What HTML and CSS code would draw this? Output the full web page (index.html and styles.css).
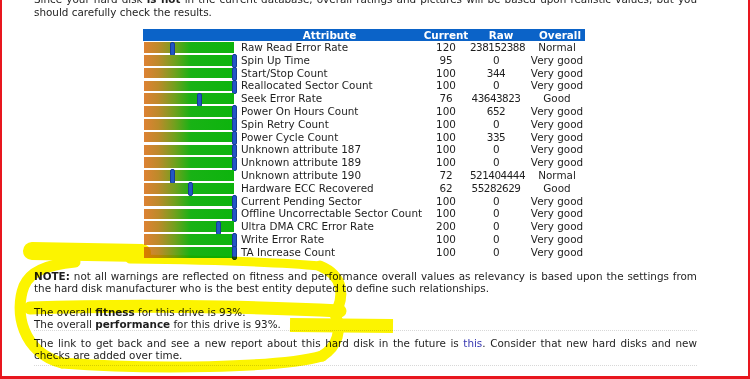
FILE: index.html
```html
<!DOCTYPE html>
<html>
<head>
<meta charset="utf-8">
<link rel="stylesheet" href="styles.css">
</head>
<body>
<div class="frame">
  <div class="content">
    <p class="intro">Since your hard disk <b>is not</b> in the current database, overall ratings and pictures will be based upon realistic values, but you should carefully check the results.</p>

    <div class="smart">
      <div class="hd"></div><div class="hd">Attribute</div><div class="hd">Current</div><div class="hd raw-h">Raw</div><div class="hd ov-h">Overall</div>

      <div class="barcell"><div class="bar"><span class="pin" style="left:25.5px"></span></div></div><div class="name">Raw Read Error Rate</div><div class="num">120</div><div class="num raw">238152388</div><div class="num ov">Normal</div>
      <div class="barcell"><div class="bar"><span class="pin" style="left:88px"></span></div></div><div class="name">Spin Up Time</div><div class="num">95</div><div class="num raw">0</div><div class="num ov">Very good</div>
      <div class="barcell"><div class="bar"><span class="pin" style="left:88px"></span></div></div><div class="name">Start/Stop Count</div><div class="num">100</div><div class="num raw">344</div><div class="num ov">Very good</div>
      <div class="barcell"><div class="bar"><span class="pin" style="left:88px"></span></div></div><div class="name">Reallocated Sector Count</div><div class="num">100</div><div class="num raw">0</div><div class="num ov">Very good</div>
      <div class="barcell"><div class="bar"><span class="pin" style="left:53px"></span></div></div><div class="name">Seek Error Rate</div><div class="num">76</div><div class="num raw">43643823</div><div class="num ov">Good</div>
      <div class="barcell"><div class="bar"><span class="pin" style="left:88px"></span></div></div><div class="name">Power On Hours Count</div><div class="num">100</div><div class="num raw">652</div><div class="num ov">Very good</div>
      <div class="barcell"><div class="bar"><span class="pin" style="left:88px"></span></div></div><div class="name">Spin Retry Count</div><div class="num">100</div><div class="num raw">0</div><div class="num ov">Very good</div>
      <div class="barcell"><div class="bar"><span class="pin" style="left:88px"></span></div></div><div class="name">Power Cycle Count</div><div class="num">100</div><div class="num raw">335</div><div class="num ov">Very good</div>
      <div class="barcell"><div class="bar"><span class="pin" style="left:88px"></span></div></div><div class="name">Unknown attribute 187</div><div class="num">100</div><div class="num raw">0</div><div class="num ov">Very good</div>
      <div class="barcell"><div class="bar"><span class="pin" style="left:88px"></span></div></div><div class="name">Unknown attribute 189</div><div class="num">100</div><div class="num raw">0</div><div class="num ov">Very good</div>
      <div class="barcell"><div class="bar"><span class="pin" style="left:25.5px"></span></div></div><div class="name">Unknown attribute 190</div><div class="num">72</div><div class="num raw">521404444</div><div class="num ov">Normal</div>
      <div class="barcell"><div class="bar"><span class="pin" style="left:44px"></span></div></div><div class="name">Hardware ECC Recovered</div><div class="num">62</div><div class="num raw">55282629</div><div class="num ov">Good</div>
      <div class="barcell"><div class="bar"><span class="pin" style="left:88px"></span></div></div><div class="name">Current Pending Sector</div><div class="num">100</div><div class="num raw">0</div><div class="num ov">Very good</div>
      <div class="barcell"><div class="bar"><span class="pin" style="left:88px"></span></div></div><div class="name">Offline Uncorrectable Sector Count</div><div class="num">100</div><div class="num raw">0</div><div class="num ov">Very good</div>
      <div class="barcell"><div class="bar"><span class="pin" style="left:71.5px"></span></div></div><div class="name">Ultra DMA CRC Error Rate</div><div class="num">200</div><div class="num raw">0</div><div class="num ov">Very good</div>
      <div class="barcell"><div class="bar"><span class="pin" style="left:88px"></span></div></div><div class="name">Write Error Rate</div><div class="num">100</div><div class="num raw">0</div><div class="num ov">Very good</div>
      <div class="barcell"><div class="bar"><span class="pin" style="left:88px"></span></div></div><div class="name">TA Increase Count</div><div class="num">100</div><div class="num raw">0</div><div class="num ov">Very good</div>
    </div>

    <p class="note"><b>NOTE:</b> not all warnings are reflected on fitness and performance overall values as relevancy is based upon the settings from the hard disk manufacturer who is the best entity deputed to define such relationships.</p>

    <p class="overall">The overall <b>fitness</b> for this drive is 93%.<br>The overall <b>performance</b> for this drive is 93%.</p>

    <p class="link">The link to get back and see a new report about this hard disk in the future is <a href="#">this</a>. Consider that new hard disks and new checks are added over time.</p>
  </div>

  <svg class="ink" width="750" height="379" viewBox="0 0 750 379">
    <g fill="none" stroke="#fcf400" stroke-linecap="round" stroke-linejoin="round">
      <path d="M32 251 L142 253" stroke-width="18"/>
      <path d="M130 259 C210 260 280 262 320 266" stroke-width="9"/>
      <path d="M320 266 C345 276 344 298 335 314" stroke-width="11"/>
      <path d="M30 308 C120 305 250 306 340 311" stroke-width="13"/>
      <path d="M290 325 L393 326" stroke-width="14" stroke-linecap="butt"/>
      <path d="M335 314 C342 330 338 346 322 356" stroke-width="11"/>
      <path d="M322 356 C280 368 150 370 62 363" stroke-width="11"/>
      <path d="M62 363 C22 352 14 312 24 286 C30 272 45 265 75 262" stroke-width="11"/>
    </g>
  </svg>
</div>
</body>
</html>
```

FILE: styles.css
```css
html, body {
  margin: 0;
  padding: 0;
  background: #fff;
}

.frame {
  position: relative;
  width: 750px;
  height: 379px;
  box-sizing: border-box;
  border-left: 2px solid #e8161e;
  border-right: 2px solid #e8161e;
  border-bottom: 3px solid #e8161e;
  overflow: hidden;
  font-family: "DejaVu Sans", Verdana, sans-serif;
  font-size: 10.4px;
  color: #1e1e1e;
}

.content {
  margin-top: -7.5px;
  padding: 0 51px 0 32px;
}

.content p {
  margin: 0;
  line-height: 12px;
  text-align: justify;
}

.content p.intro {
  line-height: 13px;
}

.smart {
  margin: 10.5px 0 0 109px;
  width: 442px;
  display: grid;
  grid-template-columns: 94px 185px 48px 58px 57px;
  grid-template-rows: 12px;
  grid-auto-rows: 12.8px;
}

.hd {
  background: #0b63c8;
  color: #fff;
  font-weight: bold;
  text-align: center;
  line-height: 12px;
}

.hd.raw-h {
  padding-left: 4px;
}

.hd.ov-h {
  padding-left: 7px;
}

.num.ov {
  padding-left: 1px;
}

.num.raw {
  padding-right: 6px;
  letter-spacing: -0.5px;
}

.barcell {
  position: relative;
}

.bar {
  position: relative;
  margin: 1.3px 0 0 1px;
  width: 90px;
  height: 10.6px;
  background: linear-gradient(to right, #de8234 0%, #bd8a2a 16%, #72a01e 34%, #18b215 52%, #0db40d 100%);
}

.pin {
  position: absolute;
  top: -0.8px;
  width: 3px;
  height: 12.2px;
  background: #2256c6;
  border: 0.5px solid #163c95;
  border-radius: 2px;
}

.name {
  padding-left: 4px;
  line-height: 12.8px;
  white-space: nowrap;
}

.num {
  text-align: center;
  line-height: 12.8px;
  white-space: nowrap;
}

.content p.note {
  margin-top: 11.8px;
}

.content p.overall {
  margin-top: 12px;
}

.content p.link {
  margin-top: 0;
  padding: 6px 0 4px;
  border-top: 1px dotted #d8d8d8;
  border-bottom: 1px dotted #d8d8d8;
}

.link a {
  color: #3636b0;
  text-decoration: none;
}

.ink {
  position: absolute;
  left: -2px;
  top: 0;
  pointer-events: none;
  mix-blend-mode: multiply;
}
```
